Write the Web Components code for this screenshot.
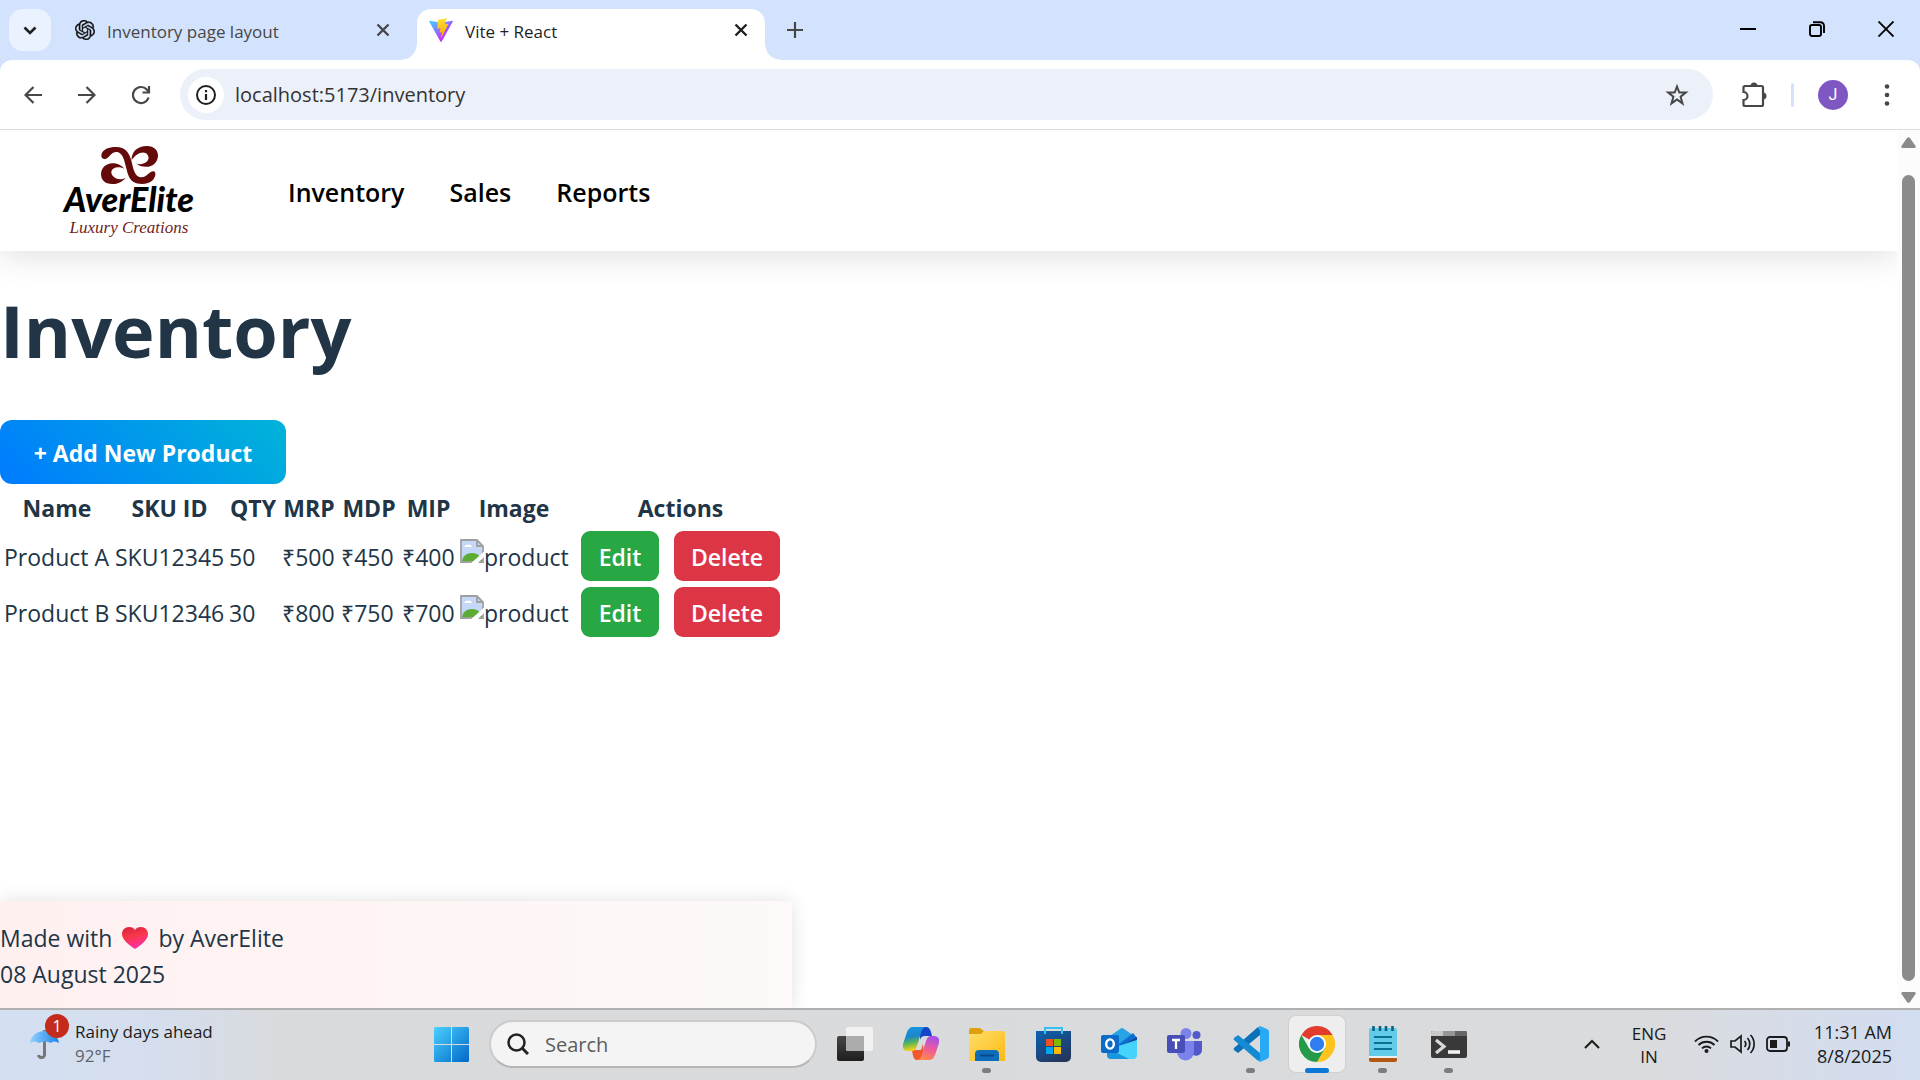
<!DOCTYPE html>
<html lang="en">
<head>
<meta charset="utf-8">
<title>Vite + React</title>
<style>
  html, body { margin: 0; height: 100%; }
  body { font-family: "Open Sans", "Noto Sans", sans-serif; color: #213547; background: #fff; overflow: hidden; }
</style>
</head>
<body>
<desktop-screen></desktop-screen>

<script>
const base = `<style>
  *, *::before, *::after { box-sizing: border-box; }
  button { font: inherit; color: inherit; border: 0; padding: 0; margin: 0; background: none; cursor: pointer; display: flex; align-items: center; justify-content: center; }
  svg { display: block; flex: none; }
</style>`;

function define(name, html) {
  const template = document.createElement('template');
  template.innerHTML = base + html;
  customElements.define(name, class extends HTMLElement {
    constructor() {
      super();
      this.attachShadow({ mode: 'open' }).appendChild(template.content.cloneNode(true));
    }
  });
}

const closeIcon = `<svg width="14" height="14" viewBox="0 0 14 14" stroke="currentColor" stroke-width="2.4" fill="none"><path d="M1.5 1.5l11 11M12.5 1.5l-11 11"/></svg>`;

/* ---------- browser tab ---------- */
define('browser-tab', `<style>
  :host { display: flex; align-items: center; height: 42px; padding-left: 14px; color: #474747; font-size: 17px; }
  :host([active]) { position: relative; color: #1f1f1f; background: #fff; height: 51px; padding: 0 0 9px 12px; border-radius: 14px 14px 0 0; }
  :host([active])::before, :host([active])::after { content: ""; position: absolute; bottom: 0; width: 15px; height: 15px; }
  :host([active])::before { left: -15px; background: radial-gradient(circle at 0 0, transparent 14px, #fff 15px); }
  :host([active])::after { right: -15px; background: radial-gradient(circle at 100% 0, transparent 14px, #fff 15px); }
  .title { flex: 1; padding: 2px 0 0 12px; white-space: nowrap; }
  button { width: 24px; height: 24px; margin-right: 12px; }
</style>
<slot name="icon"></slot><span class="title"><slot></slot></span>
<button aria-label="Close tab">${closeIcon}</button>`);

/* ---------- tab strip ---------- */
define('tab-strip', `<style>
  :host { display: flex; justify-content: space-between; height: 60px; padding: 9px 9px 0; background: #d3e3fd; }
  .tabs, .controls { display: flex; align-items: flex-start; }
  .list { width: 42px; height: 42px; border-radius: 14px; background: #ebf2ff; }
  .first { width: 346px; margin-left: 10px; }
  .second { width: 348px; margin-left: 10px; }
  .new { width: 42px; height: 42px; margin-left: 9px; color: #474747; }
  .controls button { width: 69px; height: 40px; color: #000; }
  .controls { margin-right: -9px; }
</style>
<div class="tabs">
  <button class="list" aria-label="Search tabs"><svg width="14" height="9" viewBox="0 0 14 9" fill="none" stroke="#1f1f1f" stroke-width="2.6"><path d="M1.5 1.5L7 7l5.500-5.500"/></svg></button>
  <browser-tab class="first"><svg slot="icon" width="20" height="20" viewBox="0 0 24 24" fill="#111" stroke="#111" stroke-width=".4"><path d="M22.2819 9.8211a5.9847 5.9847 0 0 0-.5157-4.9108 6.0462 6.0462 0 0 0-6.5098-2.9A6.0651 6.0651 0 0 0 4.9807 4.1818a5.9847 5.9847 0 0 0-3.9977 2.9 6.0462 6.0462 0 0 0 .7427 7.0966 5.98 5.98 0 0 0 .511 4.9107 6.051 6.051 0 0 0 6.5146 2.9001A5.9847 5.9847 0 0 0 13.2599 24a6.0557 6.0557 0 0 0 5.7718-4.2058 5.9894 5.9894 0 0 0 3.9977-2.9001 6.0557 6.0557 0 0 0-.7475-7.0729zm-9.022 12.6081a4.4755 4.4755 0 0 1-2.8764-1.0408l.1419-.0804 4.7783-2.7582a.7948.7948 0 0 0 .3927-.6813v-6.7369l2.02 1.1686a.071.071 0 0 1 .038.052v5.5826a4.504 4.504 0 0 1-4.4945 4.4944zm-9.6607-4.1254a4.4708 4.4708 0 0 1-.5346-3.0137l.142.0852 4.783 2.7582a.7712.7712 0 0 0 .7806 0l5.8428-3.3685v2.3324a.0804.0804 0 0 1-.0332.0615L9.74 19.9502a4.4992 4.4992 0 0 1-6.1408-1.6464zM2.3408 7.8956a4.485 4.485 0 0 1 2.3655-1.9728V11.6a.7664.7664 0 0 0 .3879.6765l5.8144 3.3543-2.0201 1.1685a.0757.0757 0 0 1-.071 0l-4.8303-2.7865A4.504 4.504 0 0 1 2.3408 7.872zm16.5963 3.8558L13.1038 8.364 15.1192 7.2a.0757.0757 0 0 1 .071 0l4.8303 2.7913a4.4944 4.4944 0 0 1-.6765 8.1042v-5.6772a.79.79 0 0 0-.407-.667zm2.0107-3.0231l-.142-.0852-4.7735-2.7818a.7759.7759 0 0 0-.7854 0L9.409 9.2297V6.8974a.0662.0662 0 0 1 .0284-.0615l4.8303-2.7866a4.4992 4.4992 0 0 1 6.6802 4.66zM8.3065 12.863l-2.02-1.1638a.0804.0804 0 0 1-.038-.0567V6.0742a4.4992 4.4992 0 0 1 7.3757-3.4537l-.142.0805L8.704 5.459a.7948.7948 0 0 0-.3927.6813zm1.0976-2.3654l2.602-1.4998 2.6069 1.4998v2.9994l-2.5974 1.4997-2.6067-1.4997Z"/></svg>Inventory page layout</browser-tab>
  <browser-tab class="second" active><svg slot="icon" width="24" height="24" viewBox="0 0 256 257"><defs><linearGradient id="va" x1="-.8%" x2="57.6%" y1="7.6%" y2="78.4%"><stop offset="0" stop-color="#41D1FF"/><stop offset="1" stop-color="#BD34FE"/></linearGradient><linearGradient id="vb" x1="43%" x2="50%" y1="2%" y2="89%"><stop offset="0" stop-color="#FFEA83"/><stop offset=".08" stop-color="#FFDD35"/><stop offset="1" stop-color="#FFA800"/></linearGradient></defs><path fill="url(#va)" d="M255.153 37.938L134.897 252.976c-2.483 4.44-8.862 4.466-11.382.048L.875 37.958c-2.746-4.814 1.371-10.646 6.827-9.67l120.385 21.517a6.537 6.537 0 0 0 2.322-.004l117.867-21.483c5.438-.991 9.574 4.796 6.877 9.62Z"/><path fill="url(#vb)" d="M185.432.063L96.44 17.501a3.268 3.268 0 0 0-2.634 3.014l-5.474 92.456a3.268 3.268 0 0 0 3.997 3.378l24.777-5.718c2.318-.535 4.413 1.507 3.936 3.838l-7.361 36.047c-.495 2.426 1.782 4.5 4.151 3.78l15.304-4.649c2.372-.72 4.652 1.36 4.15 3.788l-11.698 56.621c-.732 3.542 3.979 5.473 5.943 2.437l1.313-2.028l72.516-144.72c1.215-2.423-.88-5.186-3.54-4.672l-25.505 4.922c-2.396.462-4.435-1.77-3.759-4.114l16.646-57.705c.677-2.35-1.37-4.583-3.769-4.113Z"/></svg>Vite + React</browser-tab>
  <button class="new" aria-label="New tab"><svg width="16" height="16" viewBox="0 0 16 16" stroke="currentColor" stroke-width="2.2"><path d="M8 0v16M0 8h16"/></svg></button>
</div>
<div class="controls">
  <button aria-label="Minimize"><svg width="16" height="16" viewBox="0 0 16 16" stroke="#000" stroke-width="2"><path d="M0 8h16"/></svg></button>
  <button aria-label="Restore"><svg width="16" height="16" viewBox="0 0 16 16" fill="none" stroke="#000" stroke-width="1.9"><rect x="1" y="4" width="11" height="11" rx="2"/><path d="M4 1.200h7.500a3.500 3.500 0 0 1 3.500 3.500V12"/></svg></button>
  <button aria-label="Close"><svg width="16" height="16" viewBox="0 0 16 16" stroke="#000" stroke-width="1.9"><path d="M.5.5l15 15M15.500.5l-15 15"/></svg></button>
</div>`);

/* ---------- toolbar ---------- */
define('tool-bar', `<style>
  :host { display: block; background: #d3e3fd; }
  .bar { display: flex; align-items: center; height: 70px; padding: 0 15px; background: #fff; border-bottom: 1px solid #dcdcdc; border-radius: 12px 12px 0 0; color: #474747; }
  button { width: 36px; height: 36px; }
  .nav { display: flex; gap: 18px; }
  .omni { flex: 1; display: flex; align-items: center; height: 51px; margin: 0 23px 0 21px; padding: 0 18px 0 8px; border-radius: 26px; background: #ecf0f9; }
  .info { background: #fff; border-radius: 50%; }
  input { flex: 1; min-width: 0; margin: 0; border: 0; padding: 0 11px; background: none; outline: 0; font: 20px "Open Sans", "Noto Sans", sans-serif; color: #333; }
  .sep { width: 3px; height: 24px; margin: 0 24px 0 19px; background: #d3e3fd; border-radius: 2px; }
  .avatar { width: 30px; height: 30px; margin-right: 21px; border-radius: 50%; background: #7e57c2; color: #fff; font: 16px Roboto, sans-serif; }
</style>
<div class="bar">
  <div class="nav">
    <button aria-label="Back"><svg width="18" height="18" viewBox="0 0 18 18" fill="none" stroke="currentColor" stroke-width="2.2"><path d="M18 9H2M9.500 1L1.500 9l8 8"/></svg></button>
    <button aria-label="Forward"><svg width="18" height="18" viewBox="0 0 18 18" fill="none" stroke="currentColor" stroke-width="2.2"><path d="M0 9h16M8.500 1l8 8-8 8"/></svg></button>
    <button aria-label="Reload"><svg width="20" height="20" viewBox="0 0 20 20" fill="none" stroke="currentColor" stroke-width="2.2"><path d="M17.600 12.500A8 8 0 1 1 16 4.700L18 7"/><path d="M18 1v6.500h-6.500"/></svg></button>
  </div>
  <div class="omni">
    <button class="info" aria-label="Site information"><svg width="20" height="20" viewBox="0 0 20 20" fill="none" stroke="#1f1f1f" stroke-width="2"><circle cx="10" cy="10" r="9"/><path d="M10 9v6M10 5v2.200" stroke-width="2.200"/></svg></button>
    <input aria-label="Address" value="localhost:5173/inventory">
    <button aria-label="Bookmark"><svg width="24" height="24" viewBox="0 0 24 24" fill="none" stroke="currentColor" stroke-width="2"><path d="M12 3.500l2.300 6h6.500l-5.200 4.200 1.900 6.700-5.500-4-5.500 4 1.900-6.700-5.200-4.200h6.500z"/></svg></button>
  </div>
  <button aria-label="Extensions"><svg width="26" height="26" viewBox="0 0 26 26" fill="none" stroke="currentColor" stroke-width="2.200"><path d="M4 4h16.500a1.500 1.500 0 0 1 1.500 1.500v17a1.500 1.500 0 0 1-1.500 1.500H4a1.500 1.500 0 0 1-1.500-1.500V18a4 4 0 0 0 0-8V5.500A1.500 1.500 0 0 1 4 4z"/><path fill="currentColor" stroke="none" d="M9.500 4a3.500 3.500 0 0 1 7 0zM22 10.500a3.300 3.300 0 0 1 0 7z"/></svg></button>
  <span class="sep"></span>
  <button class="avatar" aria-label="Profile">J</button>
  <button aria-label="Menu"><svg width="6" height="22" viewBox="0 0 6 22" fill="currentColor"><circle cx="3" cy="2.500" r="2.300"/><circle cx="3" cy="11" r="2.300"/><circle cx="3" cy="19.500" r="2.300"/></svg></button>
</div>`);

/* ---------- site navigation ---------- */
define('brand-logo', `<style>
  :host { display: flex; flex-direction: column; align-items: center; width: 150px; padding-top: 2px; white-space: nowrap; }
  .name { font: italic 900 34px/30px Lato, sans-serif; color: #000; }
  .tag { margin-top: 4px; font: italic 17px/20px "Liberation Serif", serif; color: #6f1d1d; }
</style>
<svg width="57" height="38" viewBox="0 0 127 113" preserveAspectRatio="none" fill="#650a0a">
  <path d="M1 26C3 10 18 3 33 3c22 0 30 18 35 42 4 24 8 48 22 48 12 0 18-20 28-18 6 4 3 18-3 27-6 8-14 11-24 11-26 0-30-22-35-48C52 42 48 17 33 18 20 19 18 40 7 39 2 37 0 33 1 26z"/>
  <path d="M68 42C68 16 82 0 102 0c17 0 25 14 25 28 0 18-10 34-27 34-10 0-16-4-20-9 15 4 25-5 26-17 0-10-4-16-12-17-10 0-19 10-26 23z"/>
  <path d="M52 68C46 56 35 51 26 51 10 51 0 66 0 84c0 17 9 29 25 29 14 0 22-7 30-18-8 5-15 5-21 2-8-5-12-14-11-21 2-12 15-17 29-8z"/>
</svg>
<span class="name">AverElite</span><span class="tag">Luxury Creations</span>`);

define('site-nav', `<style>
  :host { display: block; position: relative; background: #fff; box-shadow: 0 6px 30px rgba(0,0,0,.12); }
  nav { display: flex; align-items: center; height: 121px; padding: 0 54px; }
  .links { display: flex; gap: 45px; margin-left: 84px; padding-top: 3px; }
  a { color: #000; font-size: 25px; line-height: 36px; font-weight: 600; text-decoration: none; }
</style>
<nav><brand-logo></brand-logo><div class="links"><a href="#inventory">Inventory</a><a href="#sales">Sales</a><a href="#reports">Reports</a></div></nav>`);

/* ---------- inventory table ---------- */
define('broken-image', `<style>
  :host { display: flex; align-items: flex-start; line-height: 36px; }
</style>
<svg width="24" height="24" viewBox="0 0 24 24"><path d="M1 1h16l6 6v16H1z" fill="#c6d8f8"/><path d="M4 8a3 3 0 0 1 3-2 3.500 3.500 0 0 1 5 2z" fill="#fff"/><path d="M2 23c0-6 5-9 10-9s9 3 11 9z" fill="#5aad32"/><path d="M1 1h16l6 6v16H1zM17 1v6h6" fill="none" stroke="#a0a0a0" stroke-width="1.800"/><path d="M10 25L25 12v5l-8 8z" fill="#fff"/></svg><slot></slot>`);

define('action-button', `<style>
  :host { display: block; }
  button { width: 100%; height: 50px; padding-top: 2px; border-radius: 9px; background: var(--tone); color: #fff; font-size: 23px; font-weight: 600; }
  :host([kind=edit]) { --tone: #28a745; width: 78px; }
  :host([kind=delete]) { --tone: #dc3545; width: 106px; }
</style><button><slot></slot></button>`);

const row = (n, sku, q, a, b, c) => `<tr><td>${n}</td><td>${sku}</td><td>${q}</td><td>₹${a}</td><td>₹${b}</td><td>₹${c}</td><td><broken-image>product</broken-image></td><td class="act"><div class="actions"><action-button kind="edit">Edit</action-button><action-button kind="delete">Delete</action-button></div></td></tr>`;

define('inventory-view', `<style>
  :host { display: block; flex: 1; }
  h1 { margin: 0; padding: 31px 0 42px 0; font-size: 72px; line-height: 96px; font-weight: 700; }
  .add { width: 286px; height: 64px; padding-top: 2px; border-radius: 12px; background: linear-gradient(45deg, #007bff, #00b4d8); color: #fff; font-size: 23px; font-weight: 700; }
  table { width: 792px; margin-top: 1px; table-layout: fixed; border-spacing: 3px; font-size: 23px; line-height: 36px; white-space: nowrap; }
  th, td { padding: 2px 1px 0; overflow: visible; }
  th { height: 38px; font-weight: 700; text-align: center; }
  td { height: 53px; text-align: left; }
  .act { padding-top: 0; }
  .actions { display: flex; justify-content: center; gap: 15px; }
</style>
<h1>Inventory</h1>
<button class="add">+ Add New Product</button>
<table>
  <colgroup><col style="width:108px"><col style="width:111px"><col style="width:50px"><col style="width:56px"><col style="width:58px"><col style="width:55px"><col style="width:110px"><col style="width:217px"></colgroup>
  <thead><tr><th>Name</th><th>SKU ID</th><th>QTY</th><th>MRP</th><th>MDP</th><th>MIP</th><th>Image</th><th>Actions</th></tr></thead>
  <tbody>${row('Product A', 'SKU12345', 50, 500, 450, 400)}${row('Product B', 'SKU12346', 30, 800, 750, 700)}</tbody>
</table>`);

define('site-footer', `<style>
  :host { display: block; width: 792px; padding: 19px 0 16px; background: linear-gradient(90deg, #fff0f0, #fdf9f9); box-shadow: 0 0 18px rgba(0,0,0,.12); font-size: 23px; line-height: 36px; }
  p { margin: 0; display: flex; align-items: center; }
  svg { margin: 0 10px; }
</style>
<p>Made with<svg width="26" height="22" viewBox="0 0 26 22"><defs><linearGradient id="h" x1=".2" y1="0" x2=".5" y2="1"><stop offset="0" stop-color="#d8263c"/><stop offset=".45" stop-color="#f8364c"/><stop offset="1" stop-color="#ff2fa8"/></linearGradient></defs><path fill="url(#h)" d="M13 22C7 18 0 13 0 7c0-4 3-7 7-7 3 0 5 1 6 3 1-2 3-3 6-3 4 0 7 3 7 7 0 6-7 11-13 15z"/></svg>by AverElite</p>
<p>08 August 2025</p>`);

/* ---------- page scrollbar ---------- */
define('scroll-track', `<style>
  :host { display: flex; flex-direction: column; align-items: center; width: 23px; padding: 7px 0 5px; background: #fcfcfc; }
  .thumb { flex: 1; width: 13px; margin: 27px 0 11px; border-radius: 7px; background: #8b8b8b; }
</style>
<svg width="15" height="11" viewBox="0 0 15 11" fill="#8b8b8b"><path d="M6 1a2 2 0 0 1 3 0l5.500 8a1.300 1.300 0 0 1-1 2h-12a1.300 1.300 0 0 1-1-2z"/></svg>
<div class="thumb"></div>
<svg width="15" height="11" viewBox="0 0 15 11" fill="#8b8b8b"><path d="M6 10a2 2 0 0 0 3 0l5.500-8a1.300 1.300 0 0 0-1-2h-12a1.300 1.300 0 0 0-1 2z"/></svg>`);

/* ---------- taskbar ---------- */
define('task-item', `<style>
  :host { display: block; position: relative; width: 56px; height: 56px; border-radius: 7px; }
  button { width: 100%; height: 100%; }
  :host([open])::after, :host([active])::after { content: ""; position: absolute; left: 50%; bottom: -1px; width: 9px; height: 5px; margin-left: -5px; border-radius: 3px; background: #7d7d7d; }
  :host([active]) { background: #eeeeef; box-shadow: 0 0 0 1px #d0d0d1; }
  :host([active])::after { width: 24px; margin-left: -12px; background: #0a78d4; }
</style><button><slot></slot></button>`);

define('task-bar', `<style>
  :host { display: flex; align-items: center; height: 72px; box-sizing: border-box; padding: 0 28px 2px 0; border-top: 2px solid #b0b0b0; background: linear-gradient(90deg, #d3dff1 0, #d5deee 8%, #d9dadc 15%, #dadbdc 85%, #d6dce8 93%, #d2ddf0 100%); color: #1b1b1b; }
  .weather { display: flex; align-items: center; flex: 0 0 423px; padding-left: 30px; font-size: 17px; line-height: 24px; }
  .umbrella { position: relative; margin-right: 15px; }
  .badge { position: absolute; left: 15px; top: -15px; width: 24px; height: 24px; border-radius: 50%; background: #c42b1c; color: #fff; font-size: 16px; line-height: 24px; text-align: center; }
  .temp { color: #5f646b; }
  .apps { display: flex; align-items: center; gap: 10px; }
  label { display: flex; align-items: center; width: 328px; height: 48px; padding-left: 16px; border: 2px solid #cbcbcb; border-bottom-color: #b6b6b6; border-radius: 24px; background: #f4f4f4; }
  input { flex: 1; min-width: 0; margin: 0 0 0 16px; border: 0; padding: 0; background: none; outline: 0; font: 20px "Open Sans", "Noto Sans", sans-serif; color: #5c5c5c; }
  input::placeholder { color: #5c5c5c; opacity: 1; }
  .tray { display: flex; align-items: center; margin-left: auto; font-size: 17px; line-height: 24px; }
  .lang { margin: 2px 26px 0 30px; text-align: center; line-height: 23px; width: 38px; }
  .status { gap: 11px; margin-right: 20px; }
  .clock { width: 81px; font-size: 18px; text-align: right; white-space: nowrap; display: block; }
</style>
<div class="weather">
  <div class="umbrella"><svg width="30" height="30" viewBox="0 0 30 30"><defs><linearGradient id="u" x1="0" x2="1"><stop offset="0" stop-color="#8fd0ff"/><stop offset="1" stop-color="#1d84ea"/></linearGradient></defs><path d="M14.500 1v24a3 3 0 0 1-6 1" fill="none" stroke="#777" stroke-width="3"/><path fill="url(#u)" d="M0 14C1 6 8 2 14.500 2S28 6 29 14c-3-2-6-2-8 0-4-2-8-2-12 0-3-2-6-2-9 0z"/></svg><span class="badge">1</span></div>
  <div><div>Rainy days ahead</div><div class="temp">92°F</div></div>
</div>
<div class="apps">
  <task-item><svg width="35" height="35" viewBox="0 0 35 35"><defs><linearGradient id="w" x2="1" y2="1"><stop offset="0" stop-color="#4cd0ff"/><stop offset="1" stop-color="#0068c8"/></linearGradient></defs><path fill="url(#w)" d="M1.500 0H17v17H0V1.500A1.500 1.500 0 0 1 1.500 0zM18 0h15.500A1.500 1.500 0 0 1 35 1.500V17H18zM0 18h17v17H1.500A1.500 1.500 0 0 1 0 33.500zM18 18h17v15.500a1.500 1.500 0 0 1-1.500 1.500H18z"/></svg></task-item>
  <label><svg width="22" height="22" viewBox="0 0 22 22" fill="none" stroke="#222" stroke-width="2.500"><circle cx="9.500" cy="9.500" r="8"/><path d="M15.500 15.500l5.500 5.500" stroke-width="3"/></svg><input aria-label="Search" placeholder="Search"></label>
  <task-item><svg width="36" height="36" viewBox="0 0 36 36"><defs><linearGradient id="k" y2="1" x2="0"><stop offset="0" stop-color="#474747"/><stop offset="1" stop-color="#1e1e1e"/></linearGradient></defs><rect y="10" width="27" height="25" rx="2" fill="url(#k)"/><rect x="9" y="1" width="27" height="24" rx="2" fill="#f2f2f2"/><path d="M9 10h18v15H11a2 2 0 0 1-2-2z" fill="#acacac"/></svg></task-item>
  <task-item><svg width="36" height="34" viewBox="0 0 36 34"><defs><linearGradient id="c1" x2=".2" y2="1"><stop offset="0" stop-color="#139bea"/><stop offset=".45" stop-color="#1d86c9"/><stop offset=".7" stop-color="#58b558"/><stop offset="1" stop-color="#f4cf1c"/></linearGradient><linearGradient id="c2" x1=".6" x2=".3" y2="1"><stop offset="0" stop-color="#a650ea"/><stop offset=".5" stop-color="#ee5b9a"/><stop offset="1" stop-color="#ff8a4a"/></linearGradient></defs><path d="M17 0h6c3 0 4 2 5 5l1 4h-6c-4 0-5 1-6 4z" fill="#1745c9"/><path d="M9 23h9l2-6 1 12-4 4h-3c-3 0-4-3-5-10z" fill="#f2582c"/><path d="M10 0h13c-3 0-4 3-5 6l-4 13c-1 3-2 5-6 5H5c-4 0-6-3-5-7L4 5c1-3 3-5 6-5z" fill="url(#c1)"/><path d="M26 33H14c3 0 4-3 5-6l4-13c1-3 2-5 5-5h3c4 0 6 3 5 7l-4 12c-1 3-3 5-6 5z" fill="url(#c2)"/></svg></task-item>
  <task-item open><svg width="36" height="33" viewBox="0 0 36 33"><defs><linearGradient id="f" x2="1" y2="1"><stop offset="0" stop-color="#ffdf6b"/><stop offset="1" stop-color="#fdb913"/></linearGradient></defs><path d="M0 2a2 2 0 0 1 2-2h9l5 4v4H0z" fill="#dfa00f"/><path d="M0 6h12l3-3h19a2 2 0 0 1 2 2v28H0z" fill="url(#f)"/><path d="M6 33v-7a4 4 0 0 1 4-4h16a4 4 0 0 1 4 4v7z" fill="#0e6dbb"/><path d="M11 27.500h14" stroke="#0a4a86" stroke-width="2"/></svg></task-item>
  <task-item><svg width="35" height="35" viewBox="0 0 35 35"><defs><linearGradient id="s" x2=".6" y2="1"><stop offset="0" stop-color="#0a63b3"/><stop offset="1" stop-color="#25375f"/></linearGradient></defs><path d="M0 4h35v26a5 5 0 0 1-5 5H5a5 5 0 0 1-5-5z" fill="url(#s)"/><path d="M9 7V1h17v6" fill="none" stroke="#35c0f2" stroke-width="2"/><path fill="#f25022" d="M10 12h7v7h-7z"/><path fill="#7fba00" d="M18 12h7v7h-7z"/><path fill="#00a4ef" d="M10 20h7v7h-7z"/><path fill="#ffb900" d="M18 20h7v7h-7z"/></svg></task-item>
  <task-item><svg width="36" height="32" viewBox="0 0 36 32"><path d="M6 10L19 1a3 3 0 0 1 4 0l13 9v14H6z" fill="#29a3e6"/><path d="M18 16L32 5l4 5v3L20 23z" fill="#0f6fd0"/><path d="M18 19l18-10v4L21 24z" fill="#0b4aa2"/><path d="M8 21l28-9v15a4 4 0 0 1-4 4H10z" fill="#46d3fa"/><path d="M6 22l8 2 14 7H10a4 4 0 0 1-4-4z" fill="#1896de"/><rect y="7" width="18" height="18" rx="2" fill="#0c6bc8"/><ellipse cx="9" cy="16" rx="3.800" ry="4.600" fill="none" stroke="#fff" stroke-width="2.400"/></svg></task-item>
  <task-item><svg width="36" height="33" viewBox="0 0 36 33"><circle cx="29.500" cy="7" r="4" fill="#5059c9"/><circle cx="19" cy="5.500" r="5.500" fill="#7b83eb"/><path d="M24 13h11v9a6 6 0 0 1-11 3z" fill="#5059c9"/><path d="M10 13h17v11a8.500 8.500 0 0 1-17 0z" fill="#7b83eb"/><rect y="7" width="18" height="18" rx="2" fill="#474eb8"/><path d="M5 12h8M9 12v9" stroke="#fff" stroke-width="2.300"/></svg></task-item>
  <task-item open><svg width="36" height="36" viewBox="0 0 36 36"><path d="M27 9L5 27l-4-3a1.500 1.500 0 0 1 0-2L25 1l3 4z" fill="#0a72b8"/><path d="M1 12l4-3 22 18v8l-3-1L1 14a1.500 1.500 0 0 1 0-2z" fill="#1489d4"/><path d="M27 0l7 3a3 3 0 0 1 2 3v24a3 3 0 0 1-2 3l-7 3-3-2c2 1 3 0 3-2V4c0-2-1-3-3-2z" fill="#29a8f3"/></svg></task-item>
  <task-item active><svg width="36" height="36" viewBox="0 0 36 36"><path d="M18 18L2.400 9A18 18 0 0 1 33.600 9z" fill="#e33b2e"/><path d="M18 18V9h15.600A18 18 0 0 1 18 36l7.800-13.500z" fill="#fcc31e"/><path d="M18 18l7.800 4.500L18 36A18 18 0 0 1 2.400 9l7.800 13.500z" fill="#259b48"/><circle cx="18" cy="18" r="9" fill="#fff"/><circle cx="18" cy="18" r="7.200" fill="#2f7def"/></svg></task-item>
  <task-item open><svg width="28" height="36" viewBox="0 0 28 36"><path d="M0 31h28v3a2 2 0 0 1-2 2H2a2 2 0 0 1-2-2z" fill="#b35812"/><path d="M0 29h28v3H0z" fill="#eee"/><path d="M0 4a2 2 0 0 1 2-2h24a2 2 0 0 1 2 2v26H0z" fill="#61cbe8"/><path d="M5 11h18M5 17h18M5 23h18" stroke="#0b6f93" stroke-width="2"/><path d="M4.500 0v5M11 0v5M17 0v5M23.500 0v5" stroke="#0b6280" stroke-width="2.600"/></svg></task-item>
  <task-item open><svg width="36" height="27" viewBox="0 0 36 27"><rect width="36" height="27" rx="2" fill="#393939"/><path d="M2 0h10v5H0V2a2 2 0 0 1 2-2z" fill="#c8c8c8"/><path d="M12 0h12v5H12z" fill="#969696"/><path d="M24 0h10a2 2 0 0 1 2 2v3H24z" fill="#666"/><path d="M5 9l8 6.500L5 22" fill="none" stroke="#d9d9d9" stroke-width="3.200"/><path d="M17 21h12" stroke="#f2f2f2" stroke-width="3.600"/></svg></task-item>
</div>
<div class="tray">
  <button aria-label="Show hidden icons"><svg width="16" height="10" viewBox="0 0 16 10" fill="none" stroke="#1b1b1b" stroke-width="2"><path d="M1 9l7-7 7 7"/></svg></button>
  <button class="lang">ENG<br>IN</button>
  <button class="status" aria-label="Network, sound and battery">
    <svg width="25" height="20" viewBox="0 0 25 20" fill="none" stroke="#1b1b1b" stroke-width="1.800"><path d="M1 7.500a16 16 0 0 1 23 0M4.500 11a11.500 11.500 0 0 1 16 0M8 14.300a6.500 6.500 0 0 1 9 0"/><circle cx="12.500" cy="17" r="2" fill="#1b1b1b" stroke="none"/></svg>
    <svg width="25" height="20" viewBox="0 0 25 20" fill="none" stroke="#1b1b1b" stroke-width="1.700"><path d="M1 7h4l6-5v16l-6-5H1zM14.500 7a4.500 4.500 0 0 1 0 6M17.500 4a9 9 0 0 1 0 12M20.500 1a13 13 0 0 1 0 18"/></svg>
    <svg width="25" height="16" viewBox="0 0 25 16" fill="none" stroke="#1b1b1b" stroke-width="1.800"><rect x="1" y="1" width="20" height="14" rx="3"/><path d="M4 4h7v8H4zM22 5.500h2v5h-2z" fill="#1b1b1b" stroke="none"/></svg>
  </button>
  <button class="clock">11:31 AM<br>8/8/2025</button>
</div>`);

/* ---------- whole screen ---------- */
define('desktop-screen', `<style>
  :host { display: flex; flex-direction: column; height: 100vh; }
  .viewport { flex: 1; display: flex; min-height: 0; overflow: hidden; }
  .page { flex: 1; display: flex; flex-direction: column; min-width: 0; overflow: hidden; }
  tab-strip, tool-bar, task-bar { flex: none; }
  tab-strip { box-sizing: border-box; }
</style>
<tab-strip></tab-strip>
<tool-bar></tool-bar>
<div class="viewport">
  <div class="page"><site-nav></site-nav><inventory-view></inventory-view><site-footer></site-footer></div>
  <scroll-track></scroll-track>
</div>
<task-bar></task-bar>`);
</script>
</body>
</html>
